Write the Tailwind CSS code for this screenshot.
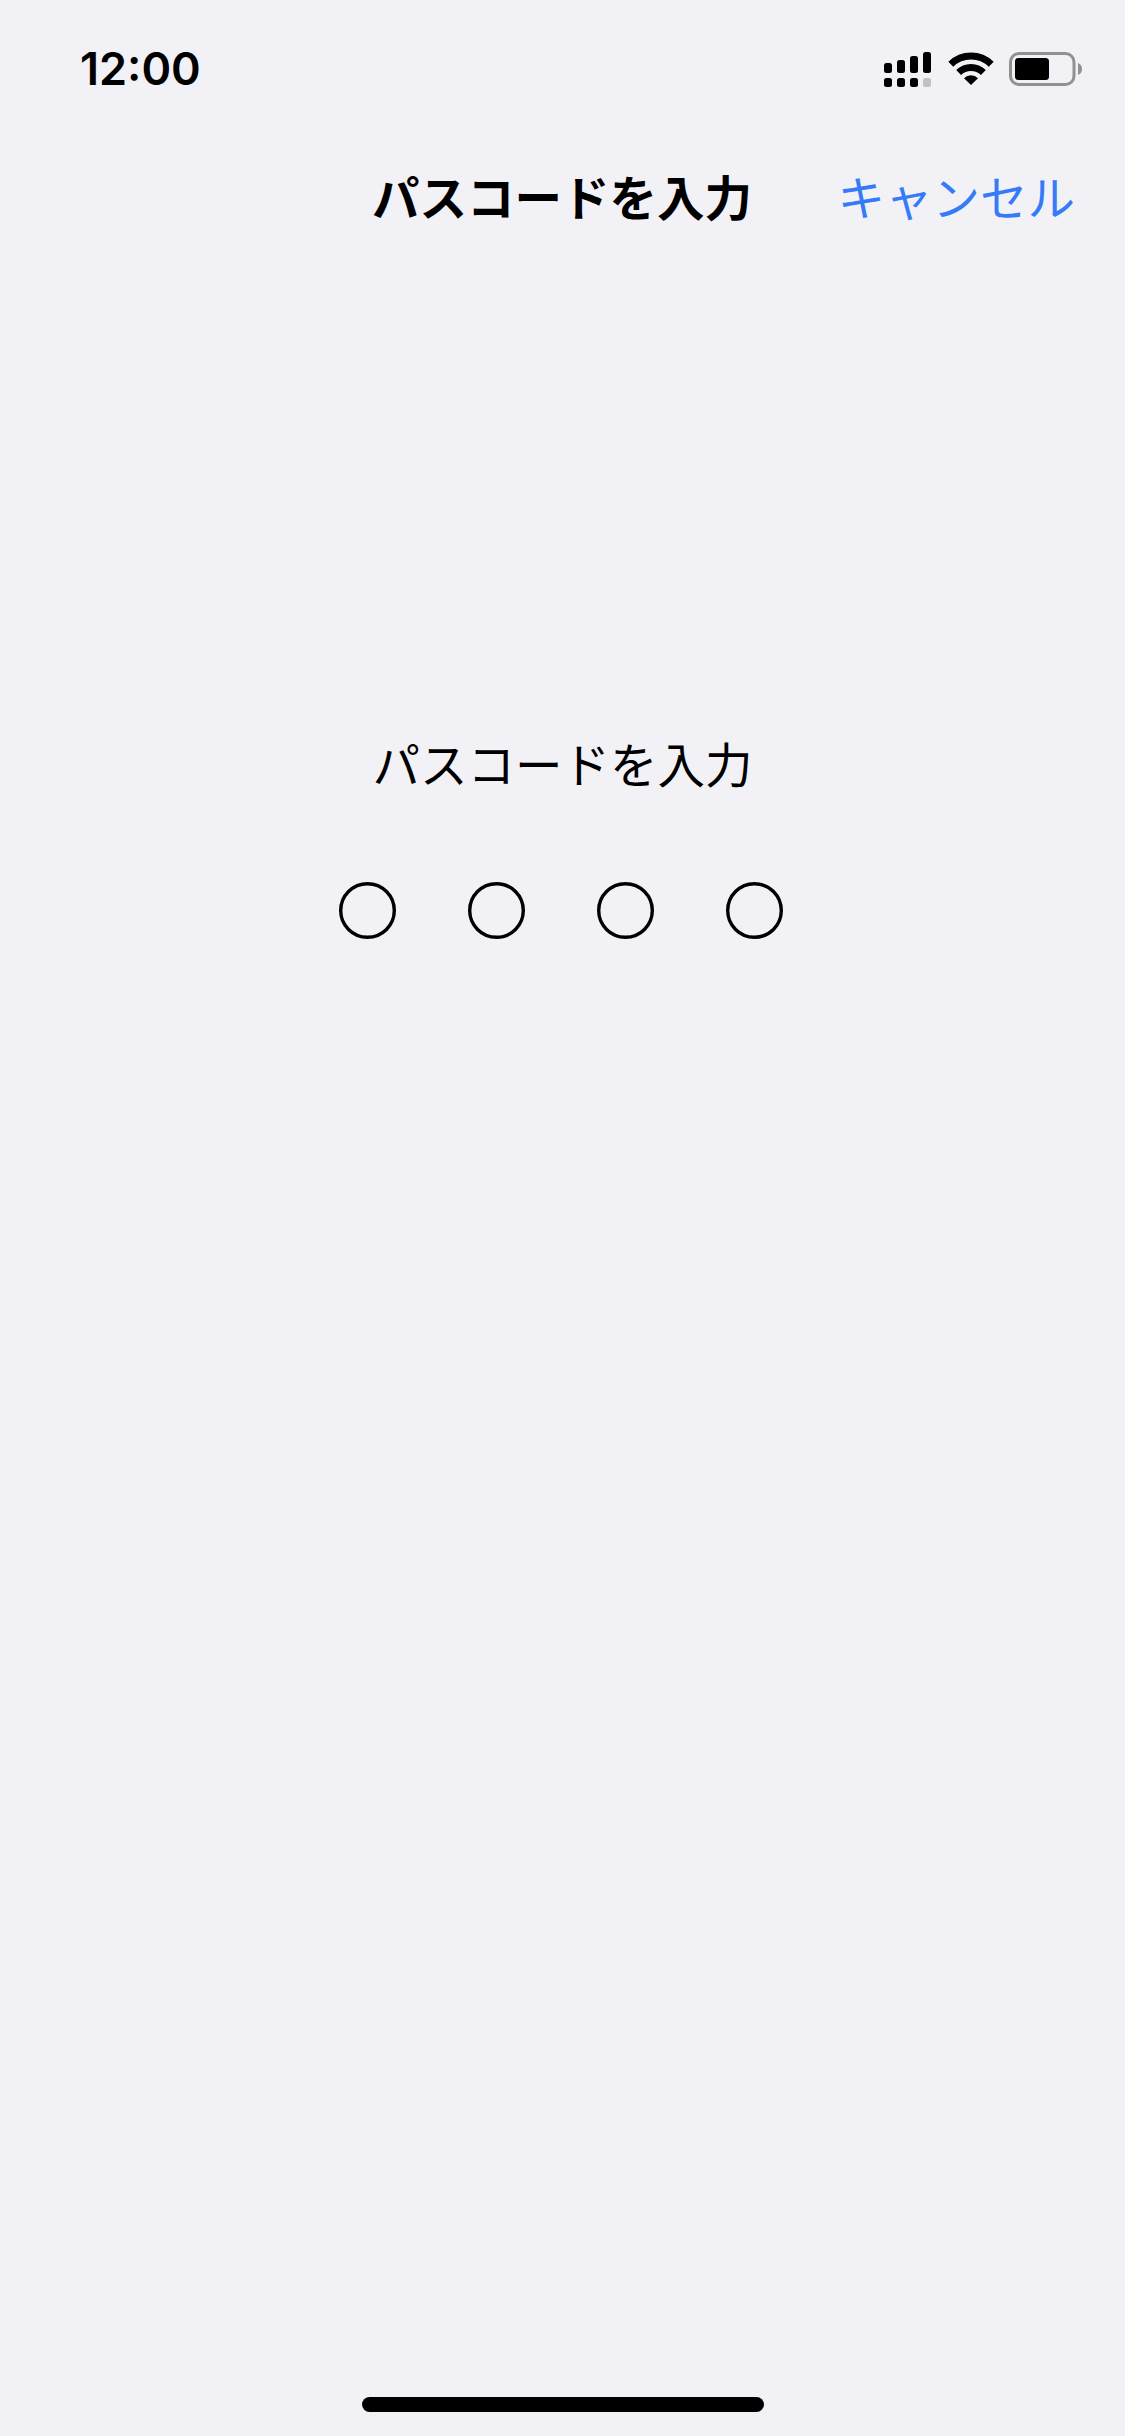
<!DOCTYPE html>
<html lang="ja">
<head>
    <meta charset="UTF-8">
    <meta name="viewport" content="width=device-width, initial-scale=1.0">
    <title>パスコードを入力</title>
    <script src="https://cdn.jsdelivr.net/npm/@tailwindcss/browser@4"></script>
</head>
<body class="bg-[#f2f1f6] text-black font-['Noto_Sans_CJK_JP',sans-serif]">
    <div class="flex flex-col w-[1125px] h-[2436px] overflow-hidden">
        <!-- Status bar -->
        <div class="flex justify-between h-[130px] pl-[80px] pr-[41px]">
            <span class="font-['Inter',sans-serif] font-semibold text-[45px] leading-[54px] pt-[42px]">12:00</span>
            <svg class="mt-[48px]" width="204" height="42" viewBox="880 48 204 42">
                <!-- Signal, two lines -->
                <rect x="884" y="63" width="8" height="10" rx="2.5"/>
                <rect x="897" y="60" width="8" height="13" rx="2.5"/>
                <rect x="910" y="56" width="8" height="17" rx="2.5"/>
                <rect x="923" y="52" width="8" height="21" rx="2.5"/>
                <rect x="884" y="78" width="8" height="9" rx="2.5"/>
                <rect x="897" y="78" width="8" height="9" rx="2.5"/>
                <rect x="910" y="78" width="8" height="9" rx="2.5"/>
                <rect x="923" y="78" width="8" height="9" rx="2.5" fill="#c1c0c5"/>
                <!-- Wi-Fi -->
                <path d="M950.8 64.3a29 29 0 0 1 40.4 0M958.6 72.6a17.8 17.8 0 0 1 24.8 0" fill="none" stroke="#000" stroke-width="7"/>
                <path d="M964 78.2a10 10 0 0 1 14 0L971 85z"/>
                <!-- Battery -->
                <rect x="1010.5" y="53.5" width="63.5" height="31" rx="8.5" fill="none" stroke="#919194" stroke-width="3"/>
                <rect x="1015" y="58" width="34" height="22" rx="3.5"/>
                <path d="M1078 63c2.500 1 4 3.300 4 6s-1.500 5-4 6z" fill="#919194"/>
            </svg>
        </div>

        <!-- Navigation bar -->
        <div class="grid grid-cols-[1fr_auto_1fr] items-center h-[132px] pr-[50px] text-[47.500px] leading-[72px]">
            <span></span>
            <h1 class="font-bold pl-[49px]">パスコードを入力</h1>
            <button class="justify-self-end font-normal text-[#357af6]">キャンセル</button>
        </div>

        <!-- Passcode entry -->
        <div class="flex flex-col items-center pt-[465px]">
            <p class="text-[47.500px] leading-[72px]">パスコードを入力</p>
            <div class="flex gap-[72px] mt-[83px] mr-[3px]">
                <svg width="57" height="57"><circle cx="28.5" cy="28.5" r="26.8" fill="none" stroke="#000" stroke-width="3.4"/></svg>
                <svg width="57" height="57"><circle cx="28.5" cy="28.5" r="26.8" fill="none" stroke="#000" stroke-width="3.4"/></svg>
                <svg width="57" height="57"><circle cx="28.5" cy="28.5" r="26.8" fill="none" stroke="#000" stroke-width="3.4"/></svg>
                <svg width="57" height="57"><circle cx="28.5" cy="28.5" r="26.8" fill="none" stroke="#000" stroke-width="3.4"/></svg>
            </div>
        </div>

        <!-- Home indicator -->
        <div class="mt-auto mb-[24px] ml-[362px] w-[402px] h-[15px] rounded-full bg-black"></div>
    </div>
</body>
</html>
